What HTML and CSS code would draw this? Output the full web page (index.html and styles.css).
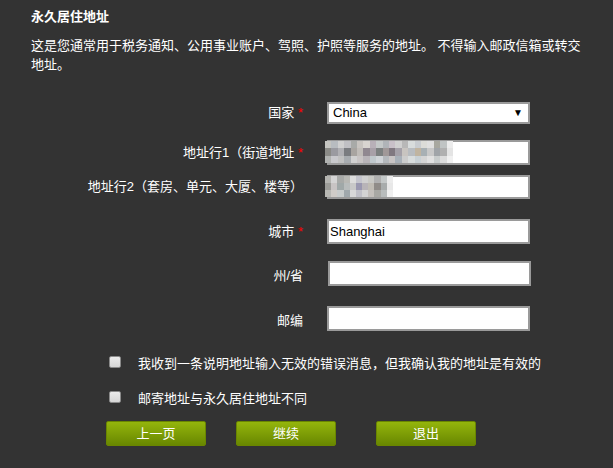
FILE: index.html
```html
<!DOCTYPE html>
<html lang="zh-CN">
<head>
<meta charset="utf-8">
<title>永久居住地址</title>
<link rel="stylesheet" href="styles.css">
</head>
<body>
<div class="page">
  <h1 class="title">永久居住地址</h1>
  <p class="intro">这是您通常用于税务通知、公用事业账户、驾照、护照等服务的地址。 不得输入邮政信箱或转交地址。</p>

  <form class="form">
    <div class="row row-country">
      <label class="lbl">国家 <span class="req">*</span></label>
      <div class="field">
        <div class="select">China<span class="arrow">▼</span></div>
      </div>
    </div>

    <div class="row row-addr1">
      <label class="lbl">地址行1（街道地址 <span class="req">*</span></label>
      <div class="field">
        <div class="input"></div>
        <svg class="mosaic mosaic-long" viewBox="0 0 20 3" preserveAspectRatio="none" shape-rendering="crispEdges">
          <rect x="0" y="0" width="1" height="1" fill="#c4c4c0"/><rect x="1" y="0" width="1" height="1" fill="#b8bcc0"/><rect x="2" y="0" width="1" height="1" fill="#d0d0d0"/><rect x="3" y="0" width="1" height="1" fill="#c0c0c4"/><rect x="4" y="0" width="1" height="1" fill="#a8aaa8"/><rect x="5" y="0" width="1" height="1" fill="#c8c4c0"/><rect x="6" y="0" width="1" height="1" fill="#d8d4d0"/><rect x="7" y="0" width="1" height="1" fill="#b8b0b8"/><rect x="8" y="0" width="1" height="1" fill="#c4c8c8"/><rect x="9" y="0" width="1" height="1" fill="#b0b4b8"/><rect x="10" y="0" width="1" height="1" fill="#c8c0c8"/><rect x="11" y="0" width="1" height="1" fill="#d0d0d0"/><rect x="12" y="0" width="1" height="1" fill="#b8b8b8"/><rect x="13" y="0" width="1" height="1" fill="#d8dcdc"/><rect x="14" y="0" width="1" height="1" fill="#c8ccd0"/><rect x="15" y="0" width="1" height="1" fill="#dcdcd8"/><rect x="16" y="0" width="1" height="1" fill="#e0e0e0"/><rect x="17" y="0" width="1" height="1" fill="#a8a8a0"/><rect x="18" y="0" width="1" height="1" fill="#c0c4c4"/><rect x="19" y="0" width="1" height="1" fill="#ececec"/>
          <rect x="0" y="1" width="1" height="1" fill="#8a8a86"/><rect x="1" y="1" width="1" height="1" fill="#9a9aa0"/><rect x="2" y="1" width="1" height="1" fill="#b0b0b4"/><rect x="3" y="1" width="1" height="1" fill="#7a7c80"/><rect x="4" y="1" width="1" height="1" fill="#a8a4a0"/><rect x="5" y="1" width="1" height="1" fill="#c0bcb8"/><rect x="6" y="1" width="1" height="1" fill="#908890"/><rect x="7" y="1" width="1" height="1" fill="#a8a0a8"/><rect x="8" y="1" width="1" height="1" fill="#7c8080"/><rect x="9" y="1" width="1" height="1" fill="#a09898"/><rect x="10" y="1" width="1" height="1" fill="#807880"/><rect x="11" y="1" width="1" height="1" fill="#a4a0a8"/><rect x="12" y="1" width="1" height="1" fill="#c8c4c0"/><rect x="13" y="1" width="1" height="1" fill="#b8bcc0"/><rect x="14" y="1" width="1" height="1" fill="#c0b4a0"/><rect x="15" y="1" width="1" height="1" fill="#a8b0b4"/><rect x="16" y="1" width="1" height="1" fill="#c8c8c8"/><rect x="17" y="1" width="1" height="1" fill="#a0a4a8"/><rect x="18" y="1" width="1" height="1" fill="#b0b0b0"/><rect x="19" y="1" width="1" height="1" fill="#e4e4e4"/>
          <rect x="0" y="2" width="1" height="1" fill="#b0b2b0"/><rect x="1" y="2" width="1" height="1" fill="#c8c8cc"/><rect x="2" y="2" width="1" height="1" fill="#c0c0c0"/><rect x="3" y="2" width="1" height="1" fill="#a8acb0"/><rect x="4" y="2" width="1" height="1" fill="#d0d0d0"/><rect x="5" y="2" width="1" height="1" fill="#c8c4c4"/><rect x="6" y="2" width="1" height="1" fill="#b8b4b8"/><rect x="7" y="2" width="1" height="1" fill="#c0c8cc"/><rect x="8" y="2" width="1" height="1" fill="#d0d4d8"/><rect x="9" y="2" width="1" height="1" fill="#b4b8bc"/><rect x="10" y="2" width="1" height="1" fill="#c8c4c4"/><rect x="11" y="2" width="1" height="1" fill="#a8b0b8"/><rect x="12" y="2" width="1" height="1" fill="#cccccc"/><rect x="13" y="2" width="1" height="1" fill="#d8dcdc"/><rect x="14" y="2" width="1" height="1" fill="#c8d0d4"/><rect x="15" y="2" width="1" height="1" fill="#d4d4d4"/><rect x="16" y="2" width="1" height="1" fill="#e0e0e0"/><rect x="17" y="2" width="1" height="1" fill="#c8cccc"/><rect x="18" y="2" width="1" height="1" fill="#dcdcdc"/><rect x="19" y="2" width="1" height="1" fill="#f0f0f0"/>
        </svg>
      </div>
    </div>

    <div class="row row-addr2">
      <label class="lbl">地址行2（套房、单元、大厦、楼等）</label>
      <div class="field">
        <div class="input"></div>
        <svg class="mosaic mosaic-short" viewBox="0 0 11 3" preserveAspectRatio="none" shape-rendering="crispEdges">
          <rect x="0" y="0" width="1" height="1" fill="#b4b4b0"/><rect x="1" y="0" width="1" height="1" fill="#d4d4d4"/><rect x="2" y="0" width="1" height="1" fill="#a8aaa8"/><rect x="3" y="0" width="1" height="1" fill="#b8b8b4"/><rect x="4" y="0" width="1" height="1" fill="#dcdcdc"/><rect x="5" y="0" width="1" height="1" fill="#c4c4cc"/><rect x="6" y="0" width="1" height="1" fill="#d0d0d0"/><rect x="7" y="0" width="1" height="1" fill="#c8c8c4"/><rect x="8" y="0" width="1" height="1" fill="#b0b0b0"/><rect x="9" y="0" width="1" height="1" fill="#c4c8c8"/><rect x="10" y="0" width="1" height="1" fill="#ececec"/>
          <rect x="0" y="1" width="1" height="1" fill="#9c9c98"/><rect x="1" y="1" width="1" height="1" fill="#c8c4c4"/><rect x="2" y="1" width="1" height="1" fill="#a0a8a8"/><rect x="3" y="1" width="1" height="1" fill="#b8bcbc"/><rect x="4" y="1" width="1" height="1" fill="#c8c8c8"/><rect x="5" y="1" width="1" height="1" fill="#9a98b0"/><rect x="6" y="1" width="1" height="1" fill="#b8b4b8"/><rect x="7" y="1" width="1" height="1" fill="#c0bcb4"/><rect x="8" y="1" width="1" height="1" fill="#908c88"/><rect x="9" y="1" width="1" height="1" fill="#a8acac"/><rect x="10" y="1" width="1" height="1" fill="#e8e8e8"/>
          <rect x="0" y="2" width="1" height="1" fill="#b8b8b4"/><rect x="1" y="2" width="1" height="1" fill="#d0ccc8"/><rect x="2" y="2" width="1" height="1" fill="#c8cccc"/><rect x="3" y="2" width="1" height="1" fill="#a0a8ac"/><rect x="4" y="2" width="1" height="1" fill="#d8d8d8"/><rect x="5" y="2" width="1" height="1" fill="#c0c0c8"/><rect x="6" y="2" width="1" height="1" fill="#d4d4d4"/><rect x="7" y="2" width="1" height="1" fill="#c4c0bc"/><rect x="8" y="2" width="1" height="1" fill="#a8a8a4"/><rect x="9" y="2" width="1" height="1" fill="#b8bcbc"/><rect x="10" y="2" width="1" height="1" fill="#f0f0f0"/>
        </svg>
      </div>
    </div>

    <div class="row row-city">
      <label class="lbl">城市 <span class="req">*</span></label>
      <div class="field"><div class="input">Shanghai</div></div>
    </div>

    <div class="row row-state">
      <label class="lbl lbl-low">州/省</label>
      <div class="field field-shift"><div class="input"></div></div>
    </div>

    <div class="row row-zip">
      <label class="lbl lbl-low">邮编</label>
      <div class="field"><div class="input"></div></div>
    </div>

    <div class="check check-first">
      <span class="box"></span>
      <span class="check-text">我收到一条说明地址输入无效的错误消息，但我确认我的地址是有效的</span>
    </div>
    <div class="check check-second">
      <span class="box"></span>
      <span class="check-text">邮寄地址与永久居住地址不同</span>
    </div>

    <div class="buttons">
      <button type="button" class="btn">上一页</button>
      <button type="button" class="btn btn-next">继续</button>
      <button type="button" class="btn btn-exit">退出</button>
    </div>
  </form>
</div>
</body>
</html>
```

FILE: styles.css
```css
html, body {
  margin: 0;
  padding: 0;
  background: #333333;
}

body {
  color: #ffffff;
  font-family: "Liberation Sans", "Noto Sans CJK SC", sans-serif;
  font-size: 13px;
  line-height: 18px;
}

.page {
  padding: 8px 0 0 31px;
}

.title {
  margin: 0;
  font-size: 13px;
  line-height: 18px;
  font-weight: bold;
}

.intro {
  margin: 10px 0 0 0;
  width: 555px;
  line-height: 19px;
}

.form {
  margin-top: 28px;
}

.row {
  display: grid;
  grid-template-columns: 272px 203px;
  column-gap: 24px;
  align-items: center;
}

.row-country { height: 22px; }
.row-addr1 { height: 25px; margin-top: 16px; }
.row-addr2 { height: 24px; margin-top: 10px; }
.row-city { height: 25px; margin-top: 20px; }
.row-state { height: 25px; margin-top: 17px; }
.row-zip { height: 25px; margin-top: 20px; }

.lbl {
  text-align: right;
  white-space: nowrap;
}

.lbl-low {
  padding-top: 4px;
}

.req {
  color: #ff0000;
}

.field {
  position: relative;
  height: 100%;
}

.field-shift {
  margin-left: 1px;
}

.select,
.input {
  box-sizing: border-box;
  width: 203px;
  height: 100%;
  background: #ffffff;
  border: 2px solid #9a9a9a;
  color: #000000;
  font-size: 13px;
  line-height: 18px;
  padding: 1px 4px;
}

.select {
  display: flex;
  align-items: center;
  justify-content: space-between;
  padding: 0 5px 0 4px;
}

.input {
  padding: 2px 0 0 1px;
}

.arrow {
  font-size: 10px;
  line-height: 10px;
  color: #000000;
}

.mosaic {
  position: absolute;
  left: -2px;
  top: 1px;
  height: 22px;
}

.mosaic-long { width: 128px; }
.mosaic-short { width: 68px; height: 21px; }

.check {
  display: flex;
  align-items: flex-start;
  margin-left: 78px;
}

.check-first { margin-top: 24px; }
.check-second { margin-top: 17px; }

.box {
  box-sizing: border-box;
  width: 12px;
  height: 12px;
  margin-top: 1px;
  margin-right: 17px;
  border: 1px solid #8a8a8a;
  border-radius: 2px;
  background: linear-gradient(#ebebeb, #d6d6d6);
  flex: none;
}

.check-text {
  line-height: 18px;
}

.buttons {
  display: flex;
  margin: 13px 0 0 75px;
}

.btn {
  box-sizing: border-box;
  width: 100px;
  height: 25px;
  padding: 0;
  border: 1px solid #6a8600;
  border-radius: 2px;
  background: linear-gradient(#94b50c, #688700);
  color: #ffffff;
  font-family: "Liberation Sans", "Noto Sans CJK SC", sans-serif;
  font-size: 13px;
  line-height: 18px;
}

.btn-next { margin-left: 30px; }
.btn-exit { margin-left: 40px; }
```
